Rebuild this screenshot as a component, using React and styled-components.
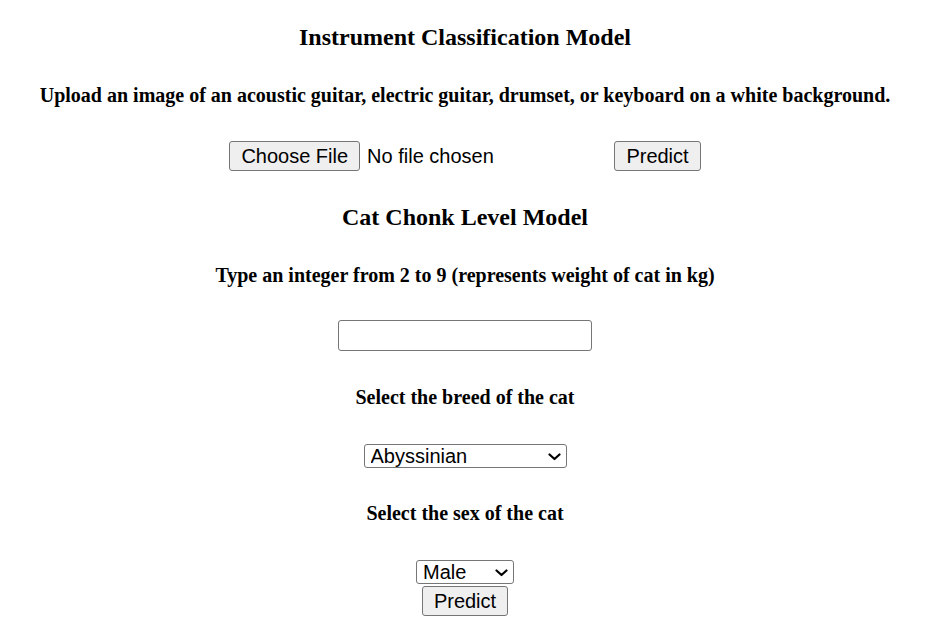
import styled, { createGlobalStyle } from "styled-components";

const GlobalStyle = createGlobalStyle`
  body {
    margin: 0;
    background: #ffffff;
    color: #000000;
    font-family: "Liberation Serif", "Times New Roman", serif;
  }
`;

const Page = styled.main`
  width: 930px;
  padding-top: 23px;
  padding-bottom: 20px;
  text-align: center;
`;

const Title = styled.h2`
  font-size: 24px;
  line-height: 28px;
  font-weight: 700;
  margin: ${(p) => p.$top || 0}px 0 0;
`;

const Prompt = styled.h3`
  font-size: 20px;
  line-height: 23px;
  font-weight: 700;
  margin: ${(p) => p.$top || 33}px 0 0;
`;

const Row = styled.div`
  display: flex;
  justify-content: center;
  align-items: center;
  gap: 4px;
  margin-top: ${(p) => p.$top || 0}px;
`;

const Button = styled.button`
  height: 30px;
  padding: 0 11px;
  border: 1px solid #767676;
  border-radius: 3px;
  background: #efefef;
  color: #000000;
  font-family: "Liberation Sans", Arial, sans-serif;
  font-size: 20px;
  line-height: 28px;
  cursor: default;
`;

const FileField = styled.label`
  display: inline-flex;
  align-items: center;
  gap: 7px;
  width: 381px;
  font-family: "Liberation Sans", Arial, sans-serif;
  font-size: 20px;
  text-align: left;
`;

const FileButton = styled(Button).attrs({ as: "span" })`
  display: inline-flex;
  align-items: center;
  box-sizing: border-box;
`;

const HiddenInput = styled.input`
  display: none;
`;

const TextInput = styled.input`
  box-sizing: border-box;
  width: 254px;
  height: 31px;
  border: 1px solid #767676;
  border-radius: 3px;
  padding: 0 4px;
  font-family: "Liberation Sans", Arial, sans-serif;
  font-size: 20px;
`;

const SelectWrap = styled.span`
  position: relative;
  display: inline-block;
  width: ${(p) => p.$width}px;
  height: 24px;
`;

const Select = styled.select`
  appearance: none;
  -webkit-appearance: none;
  box-sizing: border-box;
  width: 100%;
  height: 24px;
  border: 1px solid #767676;
  border-radius: 3px;
  background: #ffffff;
  color: #000000;
  font-family: "Liberation Sans", Arial, sans-serif;
  font-size: 20px;
  line-height: 22px;
  padding: 0 24px 0 6px;
  text-align: left;
`;

const Chevron = styled.svg`
  position: absolute;
  right: 6px;
  top: 9px;
  pointer-events: none;
`;

const breeds = [
  "Abyssinian",
  "American Shorthair",
  "Bengal",
  "British Shorthair",
  "Maine Coon",
  "Persian",
  "Ragdoll",
  "Siamese",
  "Sphynx",
];

function Dropdown({ width, value, options }) {
  return (
    <SelectWrap $width={width}>
      <Select defaultValue={value}>
        {options.map((o) => (
          <option key={o}>{o}</option>
        ))}
      </Select>
      <Chevron width="13" height="8" viewBox="0 0 13 8">
        <polyline
          points="1.5,1.5 6.5,6 11.5,1.5"
          fill="none"
          stroke="#000"
          strokeWidth="2.2"
          strokeLinecap="round"
          strokeLinejoin="round"
        />
      </Chevron>
    </SelectWrap>
  );
}

export default function App() {
  return (
    <Page>
      <GlobalStyle />
      <Title>Instrument Classification Model</Title>
      <Prompt>
        Upload an image of an acoustic guitar, electric guitar, drumset, or
        keyboard on a white background.
      </Prompt>
      <Row $top={34}>
        <FileField>
          <HiddenInput type="file" />
          <FileButton>Choose File</FileButton>
          <span>No file chosen</span>
        </FileField>
        <Button>Predict</Button>
      </Row>

      <Title $top={32}>Cat Chonk Level Model</Title>
      <Prompt>Type an integer from 2 to 9 (represents weight of cat in kg)</Prompt>
      <Row $top={33}>
        <TextInput type="text" />
      </Row>
      <Prompt $top={35}>Select the breed of the cat</Prompt>
      <Row $top={35}>
        <Dropdown width={203} value="Abyssinian" options={breeds} />
      </Row>
      <Prompt $top={34}>Select the sex of the cat</Prompt>
      <Row $top={35}>
        <Dropdown width={98} value="Male" options={["Male", "Female"]} />
      </Row>
      <Row $top={2}>
        <Button>Predict</Button>
      </Row>
    </Page>
  );
}
